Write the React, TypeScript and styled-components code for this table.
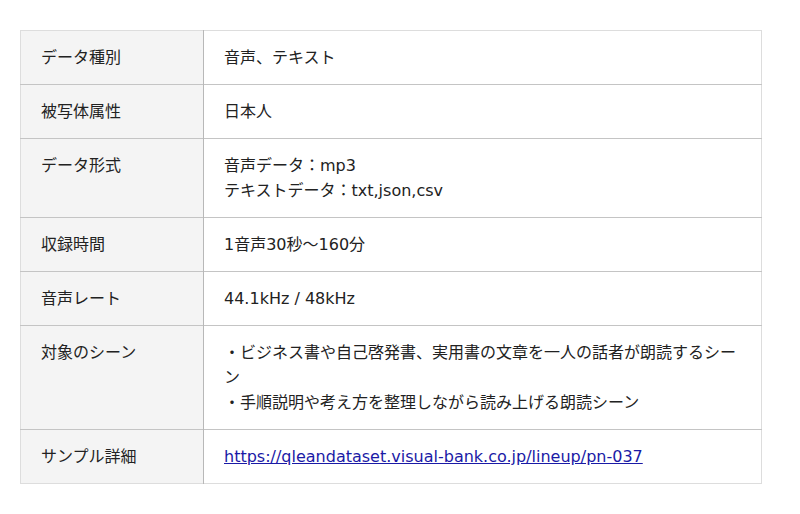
import React from 'react';
import styled, { createGlobalStyle } from 'styled-components';

const GlobalStyle = createGlobalStyle`
  body {
    margin: 0;
    background: #fff;
    font-family: "DejaVu Sans", "Noto Sans CJK JP", sans-serif;
    color: #222;
  }
`;

const Page = styled.div`
  padding: 30px 38px 30px 20px;
`;

const SpecTable = styled.table`
  width: 742px;
  border-collapse: collapse;
  font-size: 16px;
  line-height: 25px;
  border: 1px solid #ddd;
`;

const Row = styled.tr`
  border-bottom: 1px solid #c4c4c4;

  &:last-child {
    border-bottom: 1px solid #ddd;
  }
`;

const Label = styled.th`
  width: 142px;
  padding: 14px 20px;
  background: #f4f4f4;
  border-right: 1px solid #b8b8b8;
  font-weight: normal;
  text-align: left;
  vertical-align: top;
`;

const Value = styled.td`
  padding: 14px 20px;
  vertical-align: top;
`;

const Line = styled.div``;

const Link = styled.a`
  color: #1a1aa6;
  text-decoration: underline;
`;

const specs: { label: string; lines: string[]; href?: string }[] = [
  { label: 'データ種別', lines: ['音声、テキスト'] },
  { label: '被写体属性', lines: ['日本人'] },
  { label: 'データ形式', lines: ['音声データ：mp3', 'テキストデータ：txt,json,csv'] },
  { label: '収録時間', lines: ['1音声30秒〜160分'] },
  { label: '音声レート', lines: ['44.1kHz / 48kHz'] },
  {
    label: '対象のシーン',
    lines: [
      '・ビジネス書や自己啓発書、実用書の文章を一人の話者が朗読するシーン',
      '・手順説明や考え方を整理しながら読み上げる朗読シーン',
    ],
  },
  {
    label: 'サンプル詳細',
    lines: [],
    href: 'https://qleandataset.visual-bank.co.jp/lineup/pn-037',
  },
];

export default function App() {
  return (
    <Page>
      <GlobalStyle />
      <SpecTable>
        <tbody>
          {specs.map((row, i) => (
            <Row key={i}>
              <Label>{row.label}</Label>
              <Value>
                {row.href ? (
                  <Link href={row.href}>{row.href} </Link>
                ) : (
                  row.lines.map((l, j) => <Line key={j}>{l}</Line>)
                )}
              </Value>
            </Row>
          ))}
        </tbody>
      </SpecTable>
    </Page>
  );
}
